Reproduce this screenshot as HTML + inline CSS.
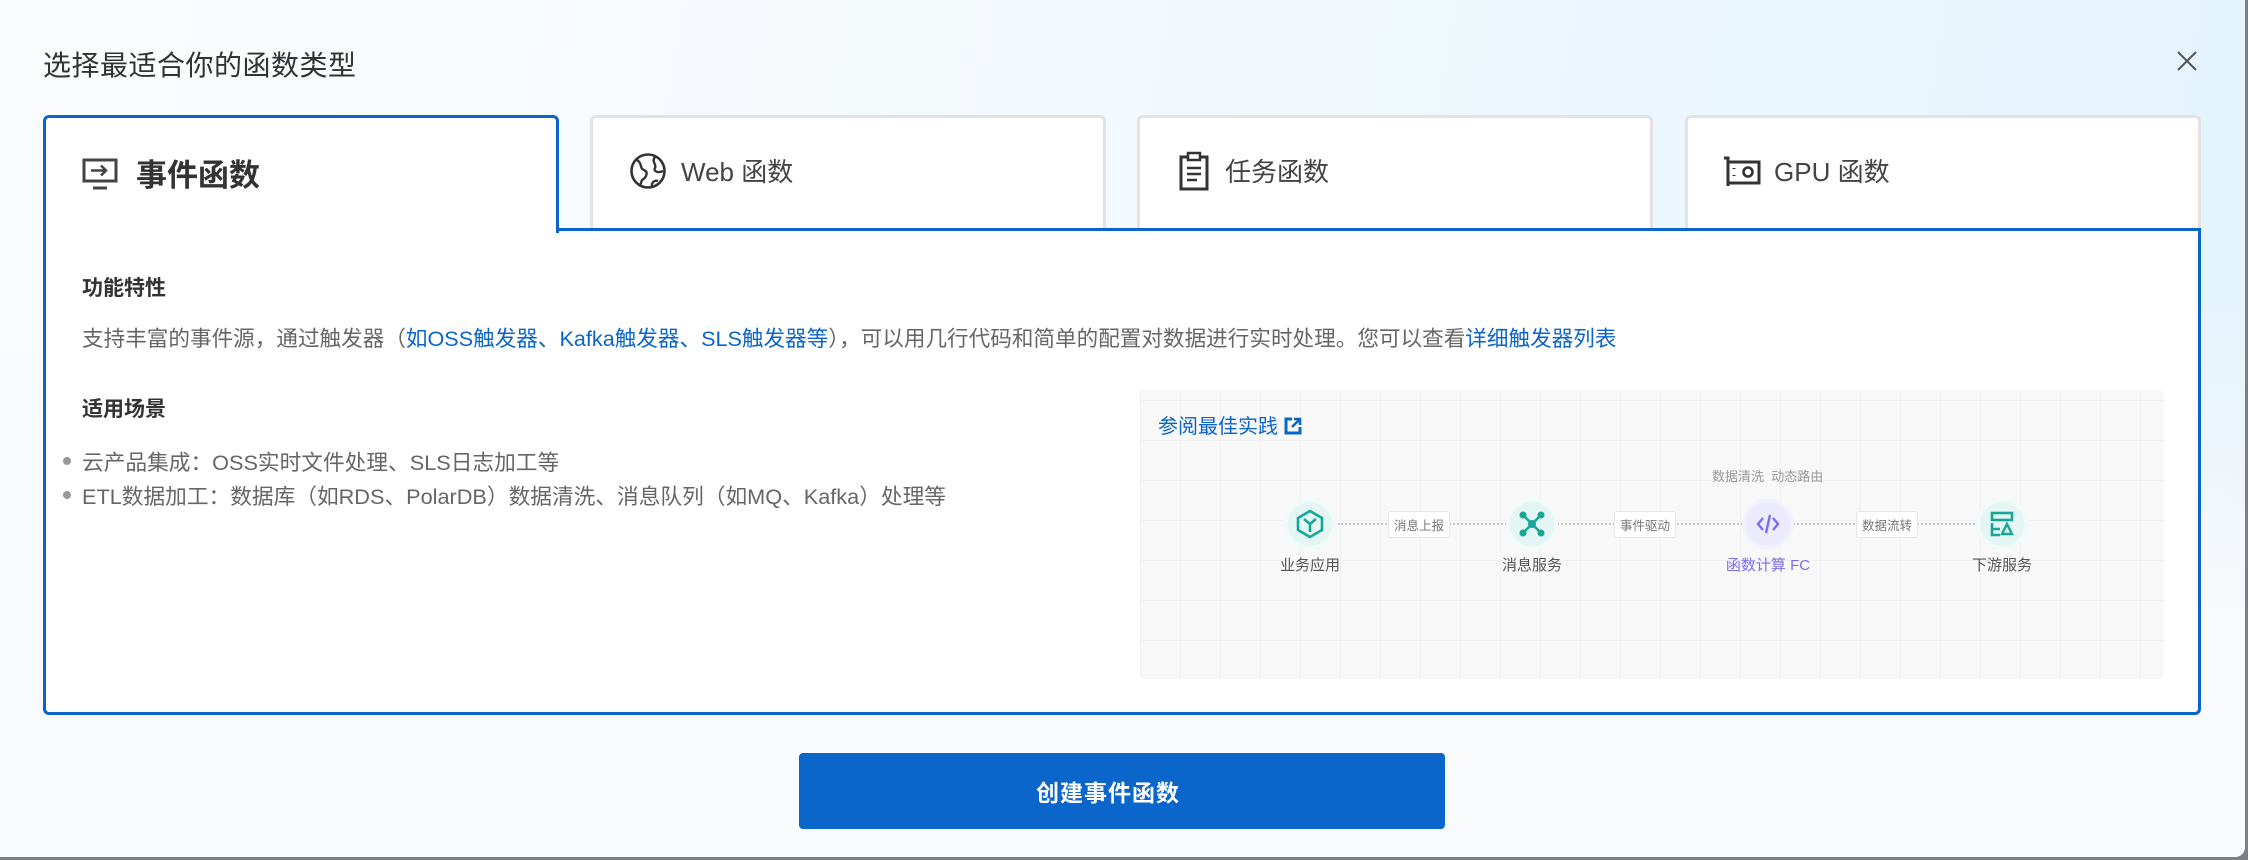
<!DOCTYPE html>
<html><head><meta charset="utf-8"><style>
*{box-sizing:border-box;margin:0;padding:0}
body{width:2248px;height:860px;overflow:hidden;background:#7d7f84;font-family:"Liberation Sans","Noto Sans CJK SC",sans-serif;position:relative}
.modal{position:absolute;left:0;top:0;width:2245px;height:857px;border-radius:0 0 10px 0;background:linear-gradient(100deg,#fbfcfe 0%,#f4f9fd 45%,#e6f5fd 85%,#e3f3fd 100%);overflow:hidden}
.modal:after{content:"";position:absolute;left:0;right:0;top:300px;bottom:0;background:linear-gradient(180deg,rgba(250,251,253,0) 0%,#f9fafc 60%)}
.abs{position:absolute;z-index:2}
.title{left:43px;top:44px;font-size:28px;color:#333;letter-spacing:0.5px}
.close{left:2176px;top:50px;width:22px;height:22px}
.tab{top:115px;height:116px;width:516px;background:#fff;border:3px solid #e3e3e3;border-bottom:none;border-radius:6px 6px 0 0}
.tab .lbl{position:absolute;top:34px;font-size:26px;color:#444}
.tab.on{border-color:#0b64c9;height:118px;z-index:4}
.panel{left:43px;top:228px;width:2158px;height:487px;background:#fff;border:3px solid #0b64c9;border-radius:0 0 6px 6px;z-index:3}
.h{font-size:21px;font-weight:bold;color:#333;position:absolute}
.txt{font-size:21.6px;color:#666;position:absolute;white-space:nowrap}
a{color:#0b64c9;text-decoration:none}
.li{position:absolute;font-size:21.7px;color:#666;white-space:nowrap}
.li:before{content:"";position:absolute;left:-19px;top:11px;width:8px;height:8px;border-radius:50%;background:#999}
.diag{position:absolute;left:1094px;top:159px;width:1024px;height:289px;background-color:#f8f8f9;background-image:linear-gradient(#f0f0f1 1px,transparent 1px),linear-gradient(90deg,#f0f0f1 1px,transparent 1px);background-size:40px 40px;background-position:0 10px;border-radius:4px}
.node{position:absolute;width:52px;height:52px;border-radius:50%;background:#e3f6f3;border:4px solid #f0fbf9;display:flex;align-items:center;justify-content:center}
.nl{position:absolute;font-size:15px;color:#555;width:140px;text-align:center}
.el{position:absolute;font-size:12.5px;color:#777;background:#fff;border:1px solid #e6e6e6;border-radius:3px;padding:3px 5px}
.line{position:absolute;height:0;border-top:2px dotted #c8c8c8}
.btn{left:799px;top:753px;width:646px;height:76px;background:#0b66cb;border-radius:4px;color:#fff;font-size:23px;font-weight:bold;display:flex;align-items:center;justify-content:center;letter-spacing:1px;padding-right:28px}
</style></head><body>
<div class="modal">
<div class="abs title">选择最适合你的函数类型</div>
<svg class="abs close" viewBox="0 0 22 22"><path d="M2 2L20 20M20 2L2 20" stroke="#555" stroke-width="2"/></svg>

<div class="abs tab on" style="left:43px">
 <svg style="position:absolute;left:36px;top:40px" width="36" height="34" viewBox="0 0 36 34"><rect x="2" y="2" width="32" height="21" fill="none" stroke="#444" stroke-width="3"/><path d="M9 12.5H24M19 7.5L24 12.5L19 17.5" fill="none" stroke="#444" stroke-width="2.5"/><path d="M11 30H25" stroke="#444" stroke-width="3"/></svg>
 <div class="lbl" style="left:90px;top:32px;font-size:31px;font-weight:bold;color:#333">事件函数</div>
</div>
<div class="abs tab" style="left:590px">
 <svg style="position:absolute;left:36px;top:34px" width="38" height="38" viewBox="0 0 38 38"><circle cx="19" cy="19" r="16.5" fill="none" stroke="#333" stroke-width="2.6"/><path d="M8 8C14 12 10 16 15 18C20 20 17 26 13 28L11 34M26 5C22 10 28 12 26 16C24 20 30 21 34 19M23 35C22 30 26 28 29 29" fill="none" stroke="#333" stroke-width="2.4"/></svg>
 <div class="lbl" style="left:88px">Web 函数</div>
</div>
<div class="abs tab" style="left:1137px">
 <svg style="position:absolute;left:38px;top:33px" width="32" height="40" viewBox="0 0 32 40"><rect x="3" y="6" width="26" height="32" fill="none" stroke="#333" stroke-width="3"/><rect x="10" y="2" width="12" height="7" fill="#fff" stroke="#333" stroke-width="2.5"/><path d="M9 17H23M9 23H23M9 29H19" stroke="#333" stroke-width="2.5"/></svg>
 <div class="lbl" style="left:85px">任务函数</div>
</div>
<div class="abs tab" style="left:1685px">
 <svg style="position:absolute;left:34px;top:37px" width="40" height="34" viewBox="0 0 40 34"><path d="M2 3H6V31M6 7H37V28H6" fill="none" stroke="#333" stroke-width="3"/><path d="M12 13V14M12 20V21" stroke="#333" stroke-width="3"/><circle cx="26" cy="17" r="4.5" fill="none" stroke="#333" stroke-width="2.6"/></svg>
 <div class="lbl" style="left:86px">GPU 函数</div>
</div>

<div class="abs panel">
 <div class="h" style="left:36px;top:41px">功能特性</div>
 <div class="txt" style="left:36px;top:91px">支持丰富的事件源，通过触发器（<a>如OSS触发器、Kafka触发器、SLS触发器等</a>），可以用几行代码和简单的配置对数据进行实时处理。您可以查看<a>详细触发器列表</a></div>
 <div class="h" style="left:36px;top:162px">适用场景</div>
 <div class="li" style="left:36px;top:215px">云产品集成：OSS实时文件处理、SLS日志加工等</div>
 <div class="li" style="left:36px;top:249px">ETL数据加工：数据库（如RDS、PolarDB）数据清洗、消息队列（如MQ、Kafka）处理等</div>

 <div class="diag">
  <div style="position:absolute;left:18px;top:20px;font-size:20px;color:#0b64c9">参阅最佳实践 <svg width="18" height="18" viewBox="0 0 18 18" style="vertical-align:-2px"><path d="M8 2H2V16H16V10" fill="none" stroke="#0b64c9" stroke-width="3"/><path d="M10 2H16V8M16 2L8 10" fill="none" stroke="#0b64c9" stroke-width="2.5"/></svg></div>
  <div style="position:absolute;left:572px;top:76px;font-size:13px;color:#999">数据清洗&nbsp;&nbsp;动态路由</div>
  <div class="line" style="left:198px;top:133px;width:640px"></div>
  <div class="node" style="left:144px;top:108px"><svg width="28" height="30" viewBox="0 0 28 30"><path d="M14 2L26 9V21L14 28L2 21V9Z" fill="none" stroke="#17a796" stroke-width="2.6"/><path d="M8 10L14 15L20 10M14 15V23" fill="none" stroke="#17a796" stroke-width="2.6"/></svg></div>
  <div class="node" style="left:366px;top:108px"><svg width="28" height="28" viewBox="0 0 28 28"><circle cx="5" cy="5" r="3.5" fill="#17a796"/><circle cx="23" cy="5" r="3.5" fill="#17a796"/><circle cx="5" cy="23" r="3.5" fill="#17a796"/><circle cx="23" cy="23" r="3.5" fill="#17a796"/><path d="M5 5L23 23M23 5L5 23" stroke="#17a796" stroke-width="2.5"/><circle cx="14" cy="14" r="4" fill="#17a796"/></svg></div>
  <div class="node" style="left:602px;top:108px;background:#ecebfd;border-color:#f3f2fe"><svg width="26" height="26" viewBox="0 0 26 26"><path d="M8 7L3 13L8 19M18 7L23 13L18 19M15 4L11 22" fill="none" stroke="#7a6cf0" stroke-width="2.4"/></svg></div>
  <div class="node" style="left:836px;top:108px"><svg width="24" height="26" viewBox="0 0 24 26"><rect x="2" y="2" width="20" height="7" fill="none" stroke="#17a796" stroke-width="2.6"/><path d="M2 12V24H10M2 18H10" fill="none" stroke="#17a796" stroke-width="2.6"/><path d="M17 13L22 23H12Z" fill="none" stroke="#17a796" stroke-width="2.4"/></svg></div>
  <div class="el" style="left:248px;top:121px">消息上报</div>
  <div class="el" style="left:474px;top:121px">事件驱动</div>
  <div class="el" style="left:716px;top:121px">数据流转</div>
  <div class="nl" style="left:100px;top:164px">业务应用</div>
  <div class="nl" style="left:322px;top:164px">消息服务</div>
  <div class="nl" style="left:558px;top:164px;color:#7a6cf0">函数计算 FC</div>
  <div class="nl" style="left:792px;top:164px">下游服务</div>
 </div>
</div>

<div class="abs btn">创建事件函数</div>
</div>
</body></html>
